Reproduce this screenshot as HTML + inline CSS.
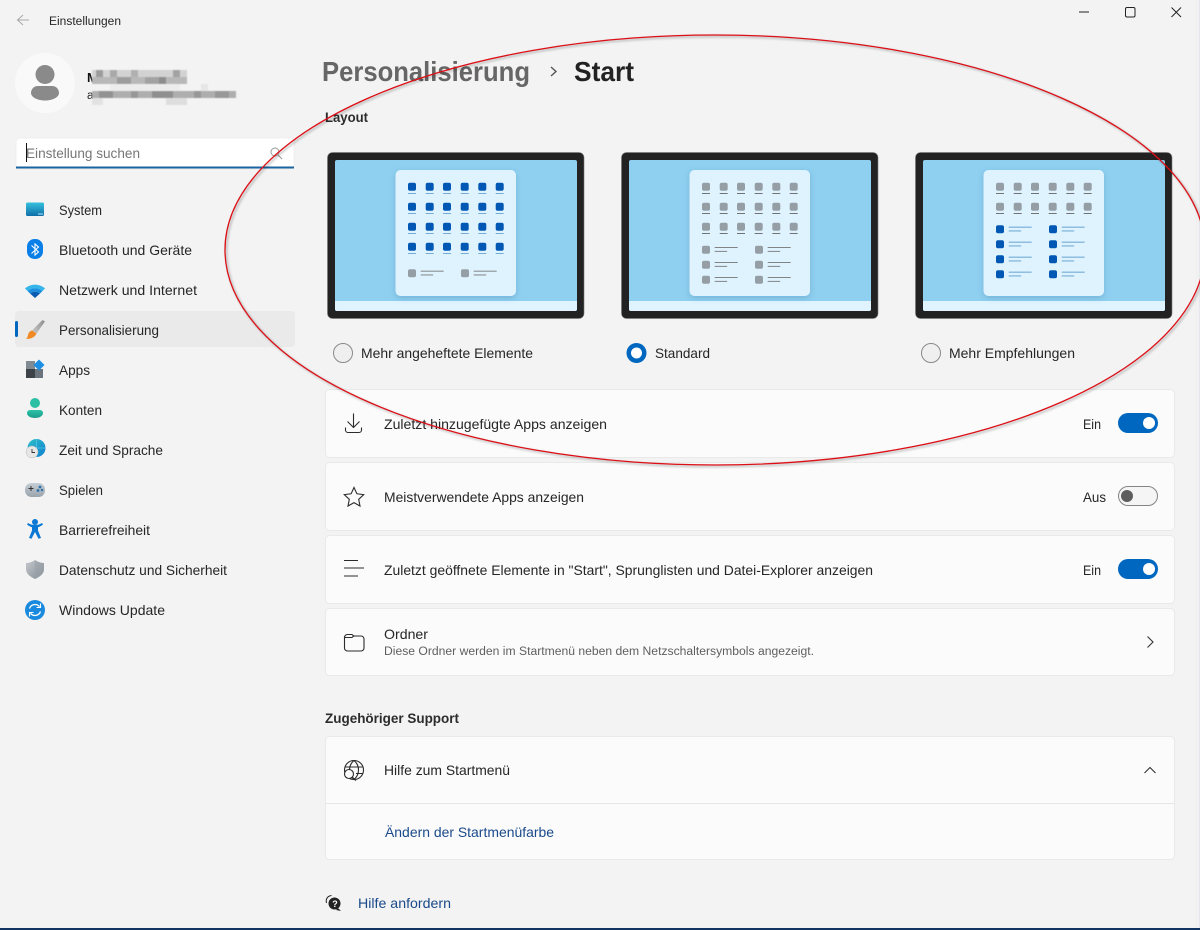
<!DOCTYPE html>
<html lang="de">
<head>
<meta charset="utf-8">
<title>Einstellungen</title>
<style>
html,body{margin:0;padding:0;background:#f3f3f3;width:1200px;height:930px;overflow:hidden}
svg{display:block}
text{font-family:"Liberation Sans",sans-serif;font-size:14px;fill:#262626}
.b{font-weight:bold}
.l{fill:#1a4a8a}
</style>
</head>
<body>
<svg xmlns="http://www.w3.org/2000/svg" width="1200" height="930" viewBox="0 0 1200 930">
<defs>
<linearGradient id="gSys" x1="0" y1="0" x2="0" y2="1"><stop offset="0" stop-color="#35c0de"/><stop offset="1" stop-color="#0f6fa8"/></linearGradient>
<linearGradient id="gBrush" x1="1" y1="0" x2="0" y2="1"><stop offset="0" stop-color="#8d8d8d"/><stop offset="1" stop-color="#c9c9c9"/></linearGradient>
<linearGradient id="gTeal" x1="0" y1="0" x2="0" y2="1"><stop offset="0" stop-color="#2cc3a8"/><stop offset="1" stop-color="#1b9c8c"/></linearGradient>
<linearGradient id="gGlobe" x1="0" y1="0" x2="1" y2="1"><stop offset="0" stop-color="#2fc0c8"/><stop offset="1" stop-color="#0f7fd0"/></linearGradient>
<linearGradient id="gPad" x1="0" y1="0" x2="0" y2="1"><stop offset="0" stop-color="#c6cdd4"/><stop offset="1" stop-color="#99a3ad"/></linearGradient>
<linearGradient id="gShield" x1="0" y1="0" x2="1" y2="1"><stop offset="0" stop-color="#c4c9ce"/><stop offset="1" stop-color="#838b93"/></linearGradient>
<filter id="sh" x="-20%" y="-20%" width="140%" height="140%"><feDropShadow dx="0" dy="2" stdDeviation="3" flood-color="#2a6f9c" flood-opacity=".28"/></filter>
<filter id="soft" x="-5%" y="-5%" width="110%" height="110%"><feGaussianBlur stdDeviation="1"/></filter>
<filter id="px" x="-5%" y="-20%" width="110%" height="140%"><feGaussianBlur stdDeviation=".5"/></filter>

<g id="gc"><rect width="8" height="8" rx="2" fill="#959ea5"/><rect x="0" y="10.400" width="8" height="0.800" fill="#555"/></g>
<g id="bc"><rect width="8" height="8" rx="2" fill="#0058b4"/><rect x="0" y="10.400" width="8" height="0.800" fill="#5a9bcb"/></g>
<g id="gl"><rect width="8" height="8" rx="2" fill="#959ea5"/><rect x="12.700" y="1.400" width="23" height="0.900" fill="#777"/><rect x="12.700" y="5.200" width="12.500" height="0.900" fill="#777"/></g>
<g id="bl"><rect width="8" height="8" rx="2" fill="#0058b4"/><rect x="12.700" y="1.400" width="23" height="0.900" fill="#5a9bcb"/><rect x="12.700" y="5.200" width="12.500" height="0.900" fill="#5a9bcb"/></g>

<g id="frame">
<rect x="327.500" y="152.500" width="256.500" height="166" rx="5" fill="#222" stroke="#777" stroke-width=".6"/>
<rect x="335" y="160" width="242" height="151" rx="2" fill="#8fcfef"/>
<path d="M335 301H577V309a2 2 0 0 1-2 2H337a2 2 0 0 1-2-2Z" fill="#e0f4ff"/>
<rect x="395.500" y="170" width="120.500" height="126" rx="5" fill="#dff3ff" filter="url(#sh)"/>
</g>
</defs>

<rect width="1200" height="930" fill="#f3f3f3"/>
<rect x="1195" y="0" width="4" height="930" fill="#f1f1f1"/>
<rect x="1199" y="0" width="1" height="928" fill="#e4e8ec"/>
<rect x="0" y="928" width="1200" height="2" fill="#123463"/>

<!-- title bar -->
<path d="M29 20H18M23 15l-5.500 5 5.500 5" fill="none" stroke="#a8a8a8" stroke-width="1"/>
<text x="49" y="25" textLength="72" lengthAdjust="spacingAndGlyphs" style="font-size:11.500px">Einstellungen</text>
<path d="M1079 12H1089" stroke="#222" stroke-width="1"/>
<rect x="1125.500" y="7.500" width="9.500" height="9.500" rx="1.500" fill="none" stroke="#222" stroke-width="1"/>
<path d="M1171.500 7.500l9.500 9.500M1181 7.500l-9.500 9.500" stroke="#222" stroke-width="1" fill="none"/>

<!-- user -->
<circle cx="45" cy="83" r="30" fill="#f9f9f9"/>
<circle cx="45" cy="74.500" r="9.500" fill="#8a8a8a"/>
<path d="M31 93c0-4 3-7 7-7h14c4 0 7 3 7 7s-6 7.500-14 7.500S31 97 31 93Z" fill="#8a8a8a"/>
<text x="87" y="82" class="b" style="font-size:13px;fill:#111">M</text>
<text x="87" y="99" style="font-size:11.500px;fill:#222">a</text>
<g filter="url(#px)">
<rect x="92" y="70" width="95" height="7" fill="#d2d2d2"/>
<rect x="92" y="77" width="95" height="7" fill="#b8b8b8"/>
<rect x="96" y="70" width="7" height="7" fill="#9b9b9b"/><rect x="110" y="70" width="7" height="7" fill="#a9a9a9"/><rect x="131" y="70" width="7" height="7" fill="#b0b0b0"/><rect x="173" y="70" width="7" height="7" fill="#a2a2a2"/>
<rect x="117" y="77" width="14" height="7" fill="#9c9c9c"/><rect x="145" y="77" width="14" height="7" fill="#a2a2a2"/><rect x="159" y="77" width="7" height="7" fill="#8d8d8d"/>
<rect x="92" y="91" width="144" height="7" fill="#aeaeae"/>
<rect x="99" y="91" width="14" height="7" fill="#929292"/><rect x="131" y="91" width="7" height="7" fill="#989898"/><rect x="152" y="91" width="21" height="7" fill="#8f8f8f"/><rect x="194" y="91" width="7" height="7" fill="#989898"/><rect x="215" y="91" width="14" height="7" fill="#989898"/>
<rect x="92" y="98" width="11" height="7" fill="#e2e2e2"/><rect x="166" y="98" width="21" height="7" fill="#dedede"/>
<rect x="110" y="84" width="70" height="7" fill="#ececec"/><rect x="201" y="84" width="7" height="7" fill="#e6e6e6"/>
</g>

<!-- search -->
<rect x="16" y="138" width="278" height="31" rx="4" fill="#fff" stroke="#ececec" stroke-width=".8"/>
<path d="M16 167.500H294" stroke="#1a649f" stroke-width="2"/>
<rect x="26" y="143" width="1" height="19" fill="#111"/>
<text x="26" y="158" textLength="114" lengthAdjust="spacingAndGlyphs" style="font-size:14px;fill:#767676">Einstellung suchen</text>
<circle cx="275" cy="152" r="4" fill="none" stroke="#999" stroke-width="1"/>
<path d="M278 155l4 4" stroke="#999" stroke-width="1"/>

<!-- nav -->
<rect x="15" y="311" width="280" height="36" rx="4" fill="#eaeaea"/>
<rect x="15" y="321" width="3" height="16" rx="1.500" fill="#0067c0"/>
<text x="59" y="215" textLength="43" lengthAdjust="spacingAndGlyphs">System</text>
<text x="59" y="255" textLength="133" lengthAdjust="spacingAndGlyphs">Bluetooth und Geräte</text>
<text x="59" y="295" textLength="138" lengthAdjust="spacingAndGlyphs">Netzwerk und Internet</text>
<text x="59" y="335" textLength="100" lengthAdjust="spacingAndGlyphs">Personalisierung</text>
<text x="59" y="375" textLength="31" lengthAdjust="spacingAndGlyphs">Apps</text>
<text x="59" y="415" textLength="43" lengthAdjust="spacingAndGlyphs">Konten</text>
<text x="59" y="455" textLength="104" lengthAdjust="spacingAndGlyphs">Zeit und Sprache</text>
<text x="59" y="495" textLength="44" lengthAdjust="spacingAndGlyphs">Spielen</text>
<text x="59" y="535" textLength="91" lengthAdjust="spacingAndGlyphs">Barrierefreiheit</text>
<text x="59" y="575" textLength="168" lengthAdjust="spacingAndGlyphs">Datenschutz und Sicherheit</text>
<text x="59" y="615" textLength="106" lengthAdjust="spacingAndGlyphs">Windows Update</text>

<!-- nav icons -->
<rect x="26" y="202.500" width="18" height="13.500" rx="1.500" fill="url(#gSys)"/>
<rect x="38" y="213.500" width="5" height="1" fill="#bfe6f5"/>
<rect x="27" y="239" width="16" height="20" rx="7.500" fill="#0a7fe8"/>
<path d="M31.500 245.500l7 6.500-3.500 3v-11l3.500 3-7 6.500" fill="none" stroke="#fff" stroke-width="1.100"/>
<path d="M25 288.500a15 15 0 0 1 20 0l-2.500 2.500a11.500 11.500 0 0 0-15 0Z" fill="#35b5ea"/>
<path d="M27.500 291a11.500 11.500 0 0 1 15 0l-2.500 2.500a8 8 0 0 0-10 0Z" fill="#1a8fdd"/>
<path d="M30 293.500a8 8 0 0 1 10 0l-5 4.500Z" fill="#0a5cb0"/>
<path d="M42.500 320l2.500 1.500-8.500 12-4.500-3Z" fill="url(#gBrush)"/>
<path d="M32 330.500l4.500 3c-1.500 4-6 5.500-10.500 5.500 2-1.500 1.500-4 3-6.500 .8-1.200 1.800-1.700 3-2Z" fill="#f08a24"/>
<rect x="26" y="361" width="9" height="8" fill="#7f8a93"/>
<rect x="26" y="369" width="9" height="9" fill="#3c4248"/>
<rect x="35" y="369" width="8" height="9" fill="#6b747c"/>
<path d="M39 359.500l5.500 5.500-5.500 5.500-5.500-5.500Z" fill="#1a8fe3"/>
<circle cx="35" cy="403" r="5" fill="#2cbfa4"/>
<path d="M27 413a3 3 0 0 1 3-3h10a3 3 0 0 1 3 3c0 3-3.500 5-8 5s-8-2-8-5Z" fill="url(#gTeal)"/>
<circle cx="36.500" cy="448" r="9" fill="url(#gGlobe)"/>
<path d="M36.500 439v18M27.500 448h18" stroke="#6fd3ef" stroke-width=".5"/>
<circle cx="32" cy="452" r="6" fill="#e6e6e6" stroke="#bbb" stroke-width=".5"/>
<path d="M32 449v3.500h3" fill="none" stroke="#333" stroke-width=".9"/>
<rect x="25" y="483" width="20" height="14" rx="6.500" fill="url(#gPad)"/>
<path d="M28.500 488.500h5M31 486v5" stroke="#333" stroke-width="1"/>
<circle cx="40" cy="487" r="1.400" fill="#2c6ea8"/><circle cx="38" cy="490.500" r="1.400" fill="#2c6ea8"/><circle cx="42" cy="490" r="1.200" fill="#2c6ea8"/>
<circle cx="35" cy="522" r="3" fill="#0a78d4"/>
<path d="M27 524.500l1-1.500c2.500 1.500 4.500 2 7 2s4.500-.5 7-2l1 1.500c-2 1.500-3.500 2.200-5 2.800v3.200l3 7.500-2.500 .8L35 532l-3.500 6.800-2.500-.8 3-7.500v-3.200c-1.500-.6-3-1.300-5-2.800Z" fill="#0a78d4"/>
<path d="M35 560c3 2 6 3 9 3v6c0 4.500-3.500 7.500-9 10-5.500-2.500-9-5.500-9-10v-6c3 0 6-1 9-3Z" fill="url(#gShield)"/>
<path d="M35 560c3 2 6 3 9 3v6c0 4.500-3.500 7.500-9 10Z" fill="#9aa1a8" opacity=".6"/>
<circle cx="35" cy="610" r="10" fill="#1a8ade"/>
<path d="M29.500 608.500a5.800 5.800 0 0 1 10-1.800M40.500 611.500a5.800 5.800 0 0 1-10 1.800" fill="none" stroke="#fff" stroke-width="1.300"/>
<path d="M40.500 603.500v4h-4M29.500 616.500v-4h4" fill="none" stroke="#fff" stroke-width="1.100"/>

<!-- heading -->
<text x="322" y="81" class="b" textLength="208" lengthAdjust="spacingAndGlyphs" style="font-size:28px;fill:#666">Personalisierung</text>
<path d="M551 67l5 4.500-5 4.500" fill="none" stroke="#555" stroke-width="1.400"/>
<text x="574" y="81" class="b" textLength="60" lengthAdjust="spacingAndGlyphs" style="font-size:28px;fill:#222">Start</text>
<text x="325" y="122" class="b" textLength="43" lengthAdjust="spacingAndGlyphs" style="font-size:14px;fill:#2c2c2c">Layout</text>

<!-- tile 1 -->
<use href="#frame"/>
<use href="#bc" x="408" y="182.700"/><use href="#bc" x="425.700" y="182.700"/><use href="#bc" x="443" y="182.700"/><use href="#bc" x="460.700" y="182.700"/><use href="#bc" x="478.300" y="182.700"/><use href="#bc" x="495.700" y="182.700"/>
<use href="#bc" x="408" y="202.700"/><use href="#bc" x="425.700" y="202.700"/><use href="#bc" x="443" y="202.700"/><use href="#bc" x="460.700" y="202.700"/><use href="#bc" x="478.300" y="202.700"/><use href="#bc" x="495.700" y="202.700"/>
<use href="#bc" x="408" y="222.700"/><use href="#bc" x="425.700" y="222.700"/><use href="#bc" x="443" y="222.700"/><use href="#bc" x="460.700" y="222.700"/><use href="#bc" x="478.300" y="222.700"/><use href="#bc" x="495.700" y="222.700"/>
<use href="#bc" x="408" y="242.700"/><use href="#bc" x="425.700" y="242.700"/><use href="#bc" x="443" y="242.700"/><use href="#bc" x="460.700" y="242.700"/><use href="#bc" x="478.300" y="242.700"/><use href="#bc" x="495.700" y="242.700"/>
<use href="#gl" x="408" y="269.300"/><use href="#gl" x="461" y="269.300"/>

<!-- tile 2 -->
<g transform="translate(294 0)">
<use href="#frame"/>
<use href="#gc" x="408" y="182.700"/><use href="#gc" x="425.700" y="182.700"/><use href="#gc" x="443" y="182.700"/><use href="#gc" x="460.700" y="182.700"/><use href="#gc" x="478.300" y="182.700"/><use href="#gc" x="495.700" y="182.700"/>
<use href="#gc" x="408" y="202.700"/><use href="#gc" x="425.700" y="202.700"/><use href="#gc" x="443" y="202.700"/><use href="#gc" x="460.700" y="202.700"/><use href="#gc" x="478.300" y="202.700"/><use href="#gc" x="495.700" y="202.700"/>
<use href="#gc" x="408" y="222.700"/><use href="#gc" x="425.700" y="222.700"/><use href="#gc" x="443" y="222.700"/><use href="#gc" x="460.700" y="222.700"/><use href="#gc" x="478.300" y="222.700"/><use href="#gc" x="495.700" y="222.700"/>
<use href="#gl" x="408" y="245.700"/><use href="#gl" x="461" y="245.700"/>
<use href="#gl" x="408" y="260.700"/><use href="#gl" x="461" y="260.700"/>
<use href="#gl" x="408" y="275.700"/><use href="#gl" x="461" y="275.700"/>
</g>

<!-- tile 3 -->
<g transform="translate(588 0)">
<use href="#frame"/>
<use href="#gc" x="408" y="182.700"/><use href="#gc" x="425.700" y="182.700"/><use href="#gc" x="443" y="182.700"/><use href="#gc" x="460.700" y="182.700"/><use href="#gc" x="478.300" y="182.700"/><use href="#gc" x="495.700" y="182.700"/>
<use href="#gc" x="408" y="202.700"/><use href="#gc" x="425.700" y="202.700"/><use href="#gc" x="443" y="202.700"/><use href="#gc" x="460.700" y="202.700"/><use href="#gc" x="478.300" y="202.700"/><use href="#gc" x="495.700" y="202.700"/>
<use href="#bl" x="408" y="225.300"/><use href="#bl" x="461" y="225.300"/>
<use href="#bl" x="408" y="240.300"/><use href="#bl" x="461" y="240.300"/>
<use href="#bl" x="408" y="255.300"/><use href="#bl" x="461" y="255.300"/>
<use href="#bl" x="408" y="270.300"/><use href="#bl" x="461" y="270.300"/>
</g>

<!-- radios -->
<circle cx="343" cy="353" r="9.500" fill="#efefef" stroke="#8a8a8a" stroke-width="1"/>
<text x="361" y="358" textLength="172" lengthAdjust="spacingAndGlyphs">Mehr angeheftete Elemente</text>
<circle cx="636.500" cy="353" r="10" fill="#0067c0"/>
<circle cx="636.500" cy="353" r="5.500" fill="#fff"/>
<text x="655" y="358" textLength="55" lengthAdjust="spacingAndGlyphs">Standard</text>
<circle cx="931" cy="353" r="9.500" fill="#efefef" stroke="#8a8a8a" stroke-width="1"/>
<text x="949" y="358" textLength="126" lengthAdjust="spacingAndGlyphs">Mehr Empfehlungen</text>

<!-- cards -->
<g fill="#fbfbfb" stroke="#e9e9e9" stroke-width="1">
<rect x="325.500" y="389.500" width="849" height="68" rx="4"/>
<rect x="325.500" y="462.500" width="849" height="68" rx="4"/>
<rect x="325.500" y="535.500" width="849" height="68" rx="4"/>
<rect x="325.500" y="608.500" width="849" height="67" rx="4"/>
<rect x="325.500" y="736.500" width="849" height="123" rx="4"/>
</g>
<path d="M326 803.500H1174" stroke="#e6e6e6" stroke-width="1"/>

<text x="384" y="429" textLength="223" lengthAdjust="spacingAndGlyphs">Zuletzt hinzugefügte Apps anzeigen</text>
<text x="384" y="502" textLength="200" lengthAdjust="spacingAndGlyphs">Meistverwendete Apps anzeigen</text>
<text x="384" y="575" textLength="489" lengthAdjust="spacingAndGlyphs">Zuletzt geöffnete Elemente in "Start", Sprunglisten und Datei-Explorer anzeigen</text>
<text x="384" y="639" textLength="44" lengthAdjust="spacingAndGlyphs">Ordner</text>
<text x="384" y="655" textLength="430" lengthAdjust="spacingAndGlyphs" style="font-size:11.500px;fill:#5f5f5f">Diese Ordner werden im Startmenü neben dem Netzschaltersymbols angezeigt.</text>
<text x="1083" y="429" textLength="18" lengthAdjust="spacingAndGlyphs">Ein</text>
<text x="1083" y="502" textLength="23" lengthAdjust="spacingAndGlyphs">Aus</text>
<text x="1083" y="575" textLength="18" lengthAdjust="spacingAndGlyphs">Ein</text>

<!-- row icons -->
<g fill="none" stroke="#2b2b2b" stroke-width="1.100">
<path d="M353.500 413.500V427M347.500 421.500l6 6 6-6"/>
<path d="M345.500 427.500v2.500a2.500 2.500 0 0 0 2.500 2.500h11a2.500 2.500 0 0 0 2.500-2.500v-2.500"/>
<path d="M354 487.500l2.900 6.300 6.800.8-5 4.700 1.300 6.700-6-3.400-6 3.400 1.300-6.700-5-4.700 6.800-.8Z"/>
<path d="M344 560.500H358M344 568H364M344 576H358"/>
<path d="M344.500 638v10a3 3 0 0 0 3 3h13.500a3 3 0 0 0 3-3v-9a3 3 0 0 0-3-3h-7.500l-1.500 1.500h-8M344.500 638a3 3 0 0 1 3-3.500h4.500l2.500 2"/>
<circle cx="354" cy="770" r="9.500"/>
<path d="M354 760.500c-6 5-6 14 0 19M354 760.500c6 5 6 14 0 19M345 767H363M356 773.500H363"/>
</g>
<circle cx="349" cy="774" r="4.500" fill="#fbfbfb" stroke="#2b2b2b" stroke-width="1.100"/>
<path d="M352.500 777.500l3.500 3" stroke="#2b2b2b" stroke-width="1.200"/>

<!-- toggles -->
<rect x="1118" y="413" width="40" height="20" rx="10" fill="#0067c0"/>
<circle cx="1149" cy="423" r="6" fill="#fff"/>
<rect x="1118.500" y="486.500" width="39" height="19" rx="9.500" fill="#f5f5f5" stroke="#858585" stroke-width="1"/>
<circle cx="1127" cy="496" r="6" fill="#5d5d5d"/>
<rect x="1118" y="559" width="40" height="20" rx="10" fill="#0067c0"/>
<circle cx="1149" cy="569" r="6" fill="#fff"/>

<path d="M1147.500 636.500l5.500 5.500-5.500 5.500" fill="none" stroke="#333" stroke-width="1.100"/>
<path d="M1144.500 773l5.500-5.500 5.500 5.500" fill="none" stroke="#333" stroke-width="1.100"/>

<!-- support -->
<text x="325" y="723" class="b" textLength="134" lengthAdjust="spacingAndGlyphs" style="font-size:14px;fill:#2c2c2c">Zugehöriger Support</text>
<text x="384" y="775" textLength="126" lengthAdjust="spacingAndGlyphs">Hilfe zum Startmenü</text>
<text x="385" y="837" class="l" textLength="169" lengthAdjust="spacingAndGlyphs">Ändern der Startmenüfarbe</text>
<text x="358" y="908" class="l" textLength="93" lengthAdjust="spacingAndGlyphs">Hilfe anfordern</text>
<circle cx="334.500" cy="903.500" r="6" fill="#222"/>
<path d="M338 908l3 3-5-1Z" fill="#222"/>
<path d="M326.500 903c-1-4 1-7 5-7.500" fill="none" stroke="#222" stroke-width="1"/>
<text x="332.300" y="907" class="b" style="font-size:9px;fill:#fff">?</text>

<!-- annotation ellipse -->
<ellipse cx="716.500" cy="251.500" rx="490" ry="215" fill="none" stroke="#000" stroke-opacity=".22" stroke-width="2" filter="url(#soft)"/>
<ellipse cx="715" cy="250" rx="490" ry="215" fill="none" stroke="#dd0f16" stroke-width="1.300"/>
</svg>
</body>
</html>
